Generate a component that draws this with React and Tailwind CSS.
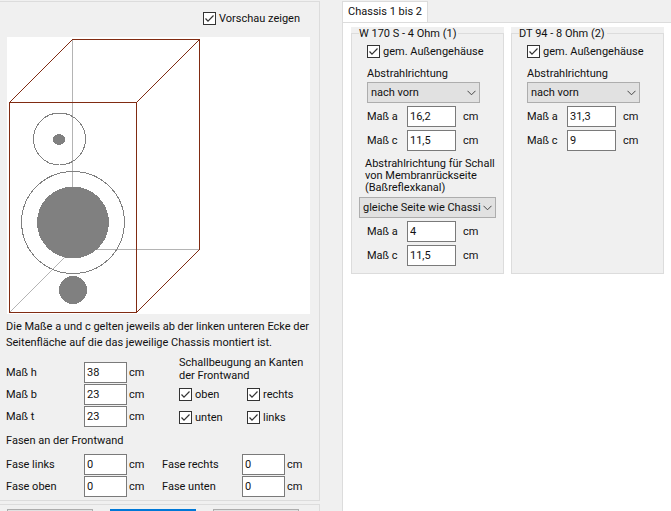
import { useId, useState } from 'react';

function CheckBox({ label, className = '' }) {
  const id = useId();
  const [checked, setChecked] = useState(true);
  return (
    <div className={`flex h-[13px] items-center gap-[3px] ${className}`}>
      <span className="grid size-[13px] shrink-0">
        <input
          id={id}
          type="checkbox"
          checked={checked}
          onChange={(e) => setChecked(e.target.checked)}
          className="peer col-start-1 row-start-1 size-[13px] appearance-none border border-[#333] bg-white"
        />
        <svg
          viewBox="0 0 13 13"
          className="pointer-events-none invisible col-start-1 row-start-1 size-[13px] peer-checked:visible"
          fill="none"
          stroke="#333"
          strokeWidth="1.2"
        >
          <path d="M2.5 6.5 L5 9.2 L10.5 3.5" />
        </svg>
      </span>
      <label htmlFor={id} className="whitespace-nowrap">
        {label}
      </label>
    </div>
  );
}

function Measure({ label, value, labelWidth, inputWidth = 'w-[43px]', unitGap = 'ml-0.5' }) {
  const id = useId();
  return (
    <div className="flex h-[21px] items-center">
      <label htmlFor={id} className={`shrink-0 whitespace-nowrap ${labelWidth}`}>
        {label}
      </label>
      <input
        id={id}
        type="text"
        defaultValue={value}
        className={`h-[21px] shrink-0 border border-[#7a7a7a] bg-white px-0.5 pb-px outline-none ${inputWidth}`}
      />
      <span className={unitGap}>cm</span>
    </div>
  );
}

function Select({ id, options, className = '' }) {
  return (
    <div className={`relative ${className}`}>
      <select
        id={id}
        className="block h-[21px] w-full appearance-none border border-[#adadad] bg-[#e1e1e1] pr-3.5 pl-[3px] outline-none"
      >
        {options.map((o) => (
          <option key={o}>{o}</option>
        ))}
      </select>
      <svg
        viewBox="0 0 9 6"
        className="pointer-events-none absolute top-2 right-1 h-1.5 w-[9px]"
        fill="none"
        stroke="#444"
      >
        <path d="M0.5 0.8 L4.5 4.8 L8.5 0.8" />
      </svg>
    </div>
  );
}

function SpeakerPreview() {
  return (
    <svg viewBox="0 0 303 277" className="block h-[277px] w-[303px] bg-white" fill="none" shapeRendering="crispEdges">
      <g stroke="#b4b4b4">
        <path d="M65.5 2.5 V212.5 H192.5" />
        <path d="M65.5 212.5 L2.5 275.5" />
      </g>
      <g stroke="#808080">
        <circle cx="52.5" cy="102" r="26" />
        <ellipse cx="66" cy="185.5" rx="51.5" ry="51" />
      </g>
      <g fill="#808080">
        <ellipse cx="52" cy="102.5" rx="6" ry="5.5" />
        <circle cx="66" cy="185.5" r="36" />
        <circle cx="66" cy="253" r="14" />
      </g>
      <g stroke="#802b12">
        <path d="M2.5 65.5 H129.5 V275.5 H2.5 Z" />
        <path d="M65.5 2.5 H192.5 V212.5" />
        <path d="M2.5 65.5 L65.5 2.5 M129.5 65.5 L192.5 2.5 M129.5 275.5 L192.5 212.5" />
      </g>
    </svg>
  );
}

function Chassis({ title, a, c, children }) {
  const id = useId();
  return (
    <div className="w-[153px] shrink-0 bg-[#f0f0f0]">
      <fieldset className="h-full min-w-0 border border-[#dcdcdc] px-[15px] pb-[7px]">
        <legend className="-ml-2 h-[13px] whitespace-nowrap pr-0.5">{title}</legend>
        <CheckBox label="gem. Außengehäuse" className="mt-[5px]" />
        <label htmlFor={id} className="mt-[9px] block">
          Abstrahlrichtung
        </label>
        <Select
          id={id}
          options={['nach vorn', 'nach hinten', 'nach links', 'nach rechts']}
          className="mt-0.5 w-[113px]"
        />
        <div className="mt-[3px] flex flex-col gap-[3px]">
          <Measure label="Maß a" value={a} labelWidth="w-10" inputWidth="w-[49px]" unitGap="ml-[7px]" />
          <Measure label="Maß c" value={c} labelWidth="w-10" inputWidth="w-[49px]" unitGap="ml-[7px]" />
        </div>
        {children}
      </fieldset>
    </div>
  );
}

export default function App() {
  const portId = useId();
  return (
    <div className="flex h-screen overflow-hidden bg-[#f0f0f0] font-['Roboto','Liberation_Sans',sans-serif] text-[11px] leading-[13px] text-[#111]">
      <div className="mt-px flex w-80 shrink-0 flex-col gap-[3px]">
        <section className="border-y border-r border-[#dcdcdc] pb-[3px] pl-[7px]">
          <CheckBox label="Vorschau zeigen" className="mt-2.5 ml-[196px]" />
          <div className="mt-3">
            <SpeakerPreview />
          </div>
          <p className="-ml-px mt-[5px] leading-4 whitespace-nowrap">
            Die Maße a und c gelten jeweils ab der linken unteren Ecke der
            <br />
            Seitenfläche auf die das jeweilige Chassis montiert ist.
          </p>
          <div className="-ml-px mt-[5px] flex">
            <div className="mt-1.5 flex w-[173px] flex-col gap-px">
              <Measure label="Maß h" value="38" labelWidth="w-[78px]" />
              <Measure label="Maß b" value="23" labelWidth="w-[78px]" />
              <Measure label="Maß t" value="23" labelWidth="w-[78px]" />
            </div>
            <div>
              <p className="whitespace-nowrap">
                Schallbeugung an Kanten
                <br />
                der Frontwand
              </p>
              <div className="mt-1.5 grid grid-cols-[68px_68px] gap-y-2.5">
                <CheckBox label="oben" />
                <CheckBox label="rechts" />
                <CheckBox label="unten" />
                <CheckBox label="links" />
              </div>
            </div>
          </div>
          <h2 className="-ml-px mt-[7px]">Fasen an der Frontwand</h2>
          <div className="-ml-px mt-[7px] grid grid-cols-[156px_auto] gap-y-px">
            <Measure label="Fase links" value="0" labelWidth="w-[78px]" />
            <Measure label="Fase rechts" value="0" labelWidth="w-20" />
            <Measure label="Fase oben" value="0" labelWidth="w-[78px]" />
            <Measure label="Fase unten" value="0" labelWidth="w-20" />
          </div>
        </section>
        <section className="flex gap-[17px] border-y border-r border-[#dcdcdc] pt-1 pb-1 pl-[7px]">
          <button type="button" className="h-6 w-[86px] border border-[#adadad] bg-[#e1e1e1]" />
          <button type="button" className="h-6 w-[86px] border-2 border-[#0078d7] bg-[#e1e1e1]" />
          <button type="button" className="h-6 w-[86px] border border-[#adadad] bg-[#e1e1e1]" />
        </section>
      </div>

      <div className="mt-px ml-[22px] flex min-w-0 flex-1 flex-col">
        <div role="tablist" className="flex">
          <button
            type="button"
            role="tab"
            aria-selected="true"
            className="-mb-px h-[22px] w-[86px] whitespace-nowrap border border-b-0 border-[#dcdcdc] bg-white pb-0.5"
          >
            Chassis 1 bis 2
          </button>
        </div>
        <div role="tabpanel" className="flex flex-1 items-start border-t border-l border-[#dcdcdc] bg-white pt-1 pl-2">
          <div className="flex gap-[7px]">
            <Chassis title="W 170 S - 4 Ohm (1)" a="16,2" c="11,5">
              <label htmlFor={portId} className="-mx-0.5 mt-[7px] block whitespace-nowrap leading-3">
                Abstrahlrichtung für Schall
                <br />
                von Membranrückseite
                <br />
                (Baßreflexkanal)
              </label>
              <Select
                id={portId}
                options={['gleiche Seite wie Chassi', 'nach hinten']}
                className="-ml-2 mt-[3px] w-[137px]"
              />
              <div className="mt-[3px] flex flex-col gap-[3px]">
                <Measure label="Maß a" value="4" labelWidth="w-10" inputWidth="w-[49px]" unitGap="ml-[7px]" />
                <Measure label="Maß c" value="11,5" labelWidth="w-10" inputWidth="w-[49px]" unitGap="ml-[7px]" />
              </div>
            </Chassis>
            <Chassis title="DT 94 - 8 Ohm (2)" a="31,3" c="9" />
          </div>
        </div>
      </div>
    </div>
  );
}
